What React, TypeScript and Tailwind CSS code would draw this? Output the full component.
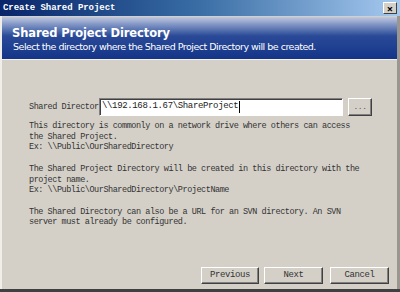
import React from "react";

const mono = { fontFamily: '"Liberation Mono", "DejaVu Sans Mono", monospace' };

function Btn({ label, w }: { label: string; w: string }) {
  return (
    <div
      className={`${w} h-[17px] flex items-center justify-center bg-[#d4d0c8] border border-t-white border-l-white border-r-[#404040] border-b-[#404040] shadow-[inset_-1px_-1px_0_#808080] text-[9px] text-[#333] tracking-[-0.4px]`}
      style={mono}
    >
      {label}
    </div>
  );
}

export default function App() {
  return (
    <div className="w-[400px] h-[292px] overflow-hidden bg-[#d4d0c8] flex flex-col border-b-[3px] border-b-[#404040]">
      {/* title bar */}
      <div className="h-[16px] flex items-center justify-between pl-[3px] pr-[3px] bg-gradient-to-r from-[#0a246a] via-[#3a6ea5] to-[#a6caf0]">
        <span className="text-[9px] font-bold text-white leading-none tracking-[-0.05px]" style={mono}>
          Create Shared Project
        </span>
        <div className="w-[14px] h-[12px] flex items-center justify-center bg-[#d4d0c8] border border-t-white border-l-white border-r-[#404040] border-b-[#404040] text-[11px] font-bold leading-none text-black">
          ×
        </div>
      </div>

      <div className="flex-1 flex flex-col border-l-2 border-l-[#f0eee8] border-r-[3px] border-r-[#9a9790]">
        <div className="h-[1px] bg-[#d4d0c8]" />
        {/* header */}
        <div className="h-[42px] flex flex-col justify-center pl-[10px] bg-gradient-to-b from-[#c0c8e0] via-[#2a4a98] via-45% to-[#143488]">
          <div className="text-[11.5px] font-bold text-white leading-[14px] mt-[3px]" style={{ fontFamily: '"DejaVu Sans", sans-serif', letterSpacing: "-0.1px" }}>
            Shared Project Directory
          </div>
          <div className="text-[9.5px] text-white leading-[13px] pl-[1px]" style={{ fontFamily: '"DejaVu Sans", sans-serif', letterSpacing: "-0.5px" }}>
            Select the directory where the Shared Project Directory will be created.
          </div>
        </div>
        <div className="h-[1px] bg-[#f4f2ee]" />

        {/* body */}
        <div className="flex-1 flex flex-col pl-[27px] pt-[38px] text-[#333] text-[8.5px] tracking-[-0.45px]" style={mono}>
          <div className="flex items-center h-[18px]">
            <span className="w-[70px] shrink-0">Shared Director</span>
            <div className="w-[244px] h-[18px] bg-white border border-t-[#808080] border-l-[#808080] border-b-white border-r-white shadow-[inset_1px_1px_0_#404040] flex items-center pl-[2px] text-[9px] text-[#222] tracking-[-0.35px]">
              \\192.168.1.67\ShareProject<span className="w-[1px] h-[12px] bg-black ml-[1px]" />
            </div>
            <div className="ml-[5px] w-[24px] h-[18px] flex items-center justify-center bg-[#d4d0c8] border border-t-white border-l-white border-r-[#404040] border-b-[#404040] shadow-[inset_-1px_-1px_0_#808080] text-[8px] text-[#555]">
              ...
            </div>
          </div>

          <div className="mt-[5px] leading-[10.7px]">
            <div>This directory is commonly on a network drive where others can access</div>
            <div>the Shared Project.</div>
            <div>Ex: \\Public\OurSharedDirectory</div>
            <div className="h-[10.7px]" />
            <div>The Shared Project Directory will be created in this directory with the</div>
            <div>project name.</div>
            <div>Ex: \\Public\OurSharedDirectory\ProjectName</div>
            <div className="h-[10.7px]" />
            <div>The Shared Directory can also be a URL for an SVN directory. An SVN</div>
            <div>server must already be configured.</div>
          </div>

          <div className="flex-1" />
          <div className="flex justify-end pb-[5px] pr-[8px]">
            <Btn label="Previous" w="w-[58px]" />
            <div className="w-[5px]" />
            <Btn label="Next" w="w-[59px]" />
            <div className="w-[7px]" />
            <Btn label="Cancel" w="w-[59px]" />
          </div>
        </div>
      </div>
    </div>
  );
}
